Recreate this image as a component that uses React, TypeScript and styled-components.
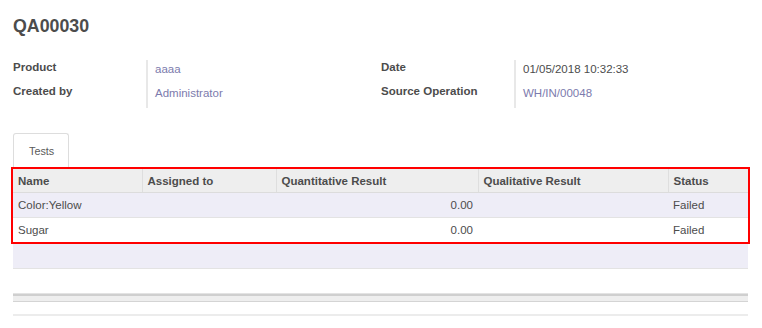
import React from "react";
import styled, { createGlobalStyle } from "styled-components";

type TestLine = {
  name: string;
  assigned: string;
  quantitative: string;
  qualitative: string;
  status: string;
};

const lines: TestLine[] = [
  { name: "Color:Yellow", assigned: "", quantitative: "0.00", qualitative: "", status: "Failed" },
  { name: "Sugar", assigned: "", quantitative: "0.00", qualitative: "", status: "Failed" },
];

const columns = [
  { label: "Name", width: 129 },
  { label: "Assigned to", width: 134 },
  { label: "Quantitative Result", width: 202 },
  { label: "Qualitative Result", width: 190 },
  { label: "Status", width: 80 },
];

const GlobalStyle = createGlobalStyle`
  html, body {
    margin: 0;
    padding: 0;
    background: #fff;
  }
  body {
    font-family: "Liberation Sans", Arial, sans-serif;
    color: #4c4c4c;
    font-size: 11.5px;
  }
`;

const Sheet = styled.div`
  padding: 15px 14px 0 13px;
  width: 762px;
  box-sizing: border-box;
`;

const Title = styled.h1`
  margin: 0;
  font-size: 17.8px;
  line-height: 22px;
  font-weight: bold;
  color: #4c4c4c;
`;

const Groups = styled.div`
  display: grid;
  grid-template-columns: 368px 1fr;
  margin-top: 23px;
`;

const Group = styled.div`
  display: grid;
  grid-template-columns: 133px 1fr;
  grid-auto-rows: 24px;
`;

const Label = styled.div`
  font-weight: bold;
  line-height: 14px;
  font-size: 11.5px;
`;

const Value = styled.div<{ $link?: boolean }>`
  border-left: 2px solid #e8e8e8;
  padding: 2px 0 0 7px;
  line-height: 14px;
  color: ${(p) => (p.$link ? "#7c7bad" : "#4c4c4c")};
`;

const Tabs = styled.div`
  display: flex;
  margin-top: 25px;
`;

const Tab = styled.div`
  height: 33px;
  padding: 0 14px 0 15px;
  border: 1px solid #ddd;
  border-bottom: none;
  border-radius: 3px 3px 0 0;
  display: flex;
  align-items: center;
  font-size: 10.8px;
  color: #5a5a5a;
`;

const Highlight = styled.div`
  border: 2px solid #f00;
  margin: 0 -2px;
`;

const Table = styled.table`
  width: 100%;
  border-collapse: collapse;
  table-layout: fixed;

  th, td {
    padding: 0 5px;
    text-align: left;
    white-space: nowrap;
    overflow: hidden;
  }

  th {
    height: 23px;
    background: #eeeeee;
    font-weight: bold;
    border-bottom: 1px solid #dcdcdc;
    border-left: 1px solid #dedede;
  }

  th:first-child {
    border-left: none;
  }
`;

const Row = styled.tr<{ $striped?: boolean }>`
  background: ${(p) => (p.$striped ? "#eeedf7" : "#fff")};
  td {
    height: 24px;
    border-bottom: 1px solid #e3e3e3;
  }
  &:last-child td {
    border-bottom: none;
  }
`;

const Cell = styled.td<{ $right?: boolean }>`
  text-align: ${(p) => (p.$right ? "right" : "left")} !important;
`;

const FillerRow = styled.div<{ $striped?: boolean }>`
  height: 24px;
  background: ${(p) => (p.$striped ? "#eeedf7" : "#fff")};
  border-bottom: 1px solid #e3e3e3;
`;

const Footer = styled.div`
  height: 5px;
  background: #eeeeee;
  border-top: 2px solid #cfcfcf;
  border-bottom: 1px solid #d4d4d4;
`;

const BottomRule = styled.div`
  margin-top: 12px;
  height: 2px;
  background: #ececec;
`;

export default function App() {
  return (
    <>
      <GlobalStyle />
      <Sheet>
        <Title>QA00030</Title>
        <Groups>
          <Group>
            <Label>Product</Label>
            <Value $link>aaaa</Value>
            <Label>Created by</Label>
            <Value $link>Administrator</Value>
          </Group>
          <Group>
            <Label>Date</Label>
            <Value>01/05/2018 10:32:33</Value>
            <Label>Source Operation</Label>
            <Value $link>WH/IN/00048</Value>
          </Group>
        </Groups>
        <Tabs>
          <Tab>Tests</Tab>
        </Tabs>
        <Highlight>
          <Table>
            <colgroup>
              {columns.map((c) => (
                <col key={c.label} style={{ width: c.width }} />
              ))}
            </colgroup>
            <thead>
              <tr>
                {columns.map((c) => (
                  <th key={c.label}>{c.label}</th>
                ))}
              </tr>
            </thead>
            <tbody>
              {lines.map((line, i) => (
                <Row key={line.name} $striped={i % 2 === 0}>
                  <Cell>{line.name}</Cell>
                  <Cell>{line.assigned}</Cell>
                  <Cell $right>{line.quantitative}</Cell>
                  <Cell>{line.qualitative}</Cell>
                  <Cell>{line.status}</Cell>
                </Row>
              ))}
            </tbody>
          </Table>
        </Highlight>
        <FillerRow $striped />
        <FillerRow />
        <Footer />
        <BottomRule />
      </Sheet>
    </>
  );
}
